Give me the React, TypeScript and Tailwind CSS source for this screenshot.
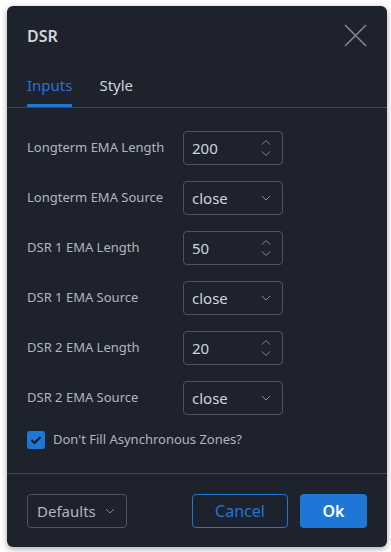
import React from "react";

const font = { fontFamily: '"Noto Sans", "Open Sans", sans-serif' };

function Spinner() {
  return (
    <svg width="12" height="22" viewBox="0 0 12 22" className="text-[#868993]">
      <path d="M2 7.5 L6 3.5 L10 7.5" fill="none" stroke="currentColor" strokeWidth="1" />
      <path d="M2 14.5 L6 18.5 L10 14.5" fill="none" stroke="currentColor" strokeWidth="1" />
    </svg>
  );
}

function Chevron() {
  return (
    <svg width="12" height="8" viewBox="0 0 12 8" className="text-[#868993]">
      <path d="M2 2 L6 6 L10 2" fill="none" stroke="currentColor" strokeWidth="1" />
    </svg>
  );
}

function NumberInput({ value }: { value: string }) {
  return (
    <div className="flex h-[34px] w-[100px] items-center justify-between rounded-[4px] border border-[#50535e] pl-[8px] pr-[10px]">
      <span className="text-[15px] text-[#d1d4dc]">{value}</span>
      <Spinner />
    </div>
  );
}

function SelectInput({ value }: { value: string }) {
  return (
    <div className="flex h-[34px] w-[100px] items-center justify-between rounded-[4px] border border-[#50535e] pl-[8px] pr-[10px]">
      <span className="text-[15px] text-[#d1d4dc]">{value}</span>
      <Chevron />
    </div>
  );
}

const rows: { label: string; kind: "num" | "sel"; value: string }[] = [
  { label: "Longterm EMA Length", kind: "num", value: "200" },
  { label: "Longterm EMA Source", kind: "sel", value: "close" },
  { label: "DSR 1 EMA Length", kind: "num", value: "50" },
  { label: "DSR 1 EMA Source", kind: "sel", value: "close" },
  { label: "DSR 2 EMA Length", kind: "num", value: "20" },
  { label: "DSR 2 EMA Source", kind: "sel", value: "close" },
];

export default function App() {
  return (
    <div className="min-h-[552px] w-[391px] bg-white pl-[7px] pt-[6px]" style={font}>
      <div className="flex h-[541px] w-[380px] flex-col rounded-[6px] bg-[#1e222d] shadow-[0_2px_6px_rgba(0,0,0,0.35)]">
        {/* header */}
        <div className="flex h-[59px] items-center justify-between pl-[20px] pr-[20px]">
          <span className="text-[16px] font-semibold text-[#d1d4dc]">DSR</span>
          <svg width="23" height="23" viewBox="0 0 23 23" className="text-[#868993]">
            <path d="M1 1 L22 22 M22 1 L1 22" stroke="currentColor" strokeWidth="1.5" fill="none" />
          </svg>
        </div>
        {/* tabs */}
        <div className="flex h-[43px] items-stretch gap-[27px] border-b border-[#434651] pl-[20px]">
          <div className="flex flex-col justify-between pt-[8px]">
            <span className="text-[15px] leading-[24px] text-[#1e76d6]">Inputs</span>
            <div className="h-[3px] rounded-t-[1px] bg-[#1e76d6]" />
          </div>
          <div className="flex flex-col pt-[8px]">
            <span className="text-[15px] leading-[24px] text-[#d1d4dc]">Style</span>
          </div>
        </div>
        {/* body */}
        <div className="flex flex-1 flex-col gap-[16px] pl-[20px] pt-[23px]">
          {rows.map((r) => (
            <div key={r.label} className="flex h-[34px] items-center">
              <span className="w-[156px] text-[13px] text-[#b2b5be]">{r.label}</span>
              {r.kind === "num" ? <NumberInput value={r.value} /> : <SelectInput value={r.value} />}
            </div>
          ))}
          <div className="mt-[0px] flex h-[18px] items-center gap-[8px]">
            <div className="flex h-[18px] w-[18px] items-center justify-center rounded-[3px] bg-[#1e76d6]">
              <svg width="12" height="10" viewBox="0 0 12 10">
                <path d="M1.5 5 L4.5 8 L10.5 2" fill="none" stroke="#131722" strokeWidth="2" />
              </svg>
            </div>
            <span className="text-[13px] text-[#b2b5be]">Don't Fill Asynchronous Zones?</span>
          </div>
        </div>
        {/* footer */}
        <div className="flex h-[74px] items-start justify-between border-t border-[#434651] px-[20px] pt-[20px]">
          <div className="flex h-[34px] w-[100px] items-center justify-between rounded-[4px] border border-[#50535e] pl-[9px] pr-[10px]">
            <span className="text-[15px] text-[#b2b5be]">Defaults</span>
            <Chevron />
          </div>
          <div className="flex gap-[12px]">
            <div className="flex h-[34px] w-[96px] items-center justify-center rounded-[4px] border border-[#1e76d6] text-[16px] text-[#1e76d6]">
              Cancel
            </div>
            <div className="flex h-[34px] w-[67px] items-center justify-center rounded-[4px] bg-[#1e76d6] text-[16px] font-semibold text-white">
              Ok
            </div>
          </div>
        </div>
      </div>
    </div>
  );
}
